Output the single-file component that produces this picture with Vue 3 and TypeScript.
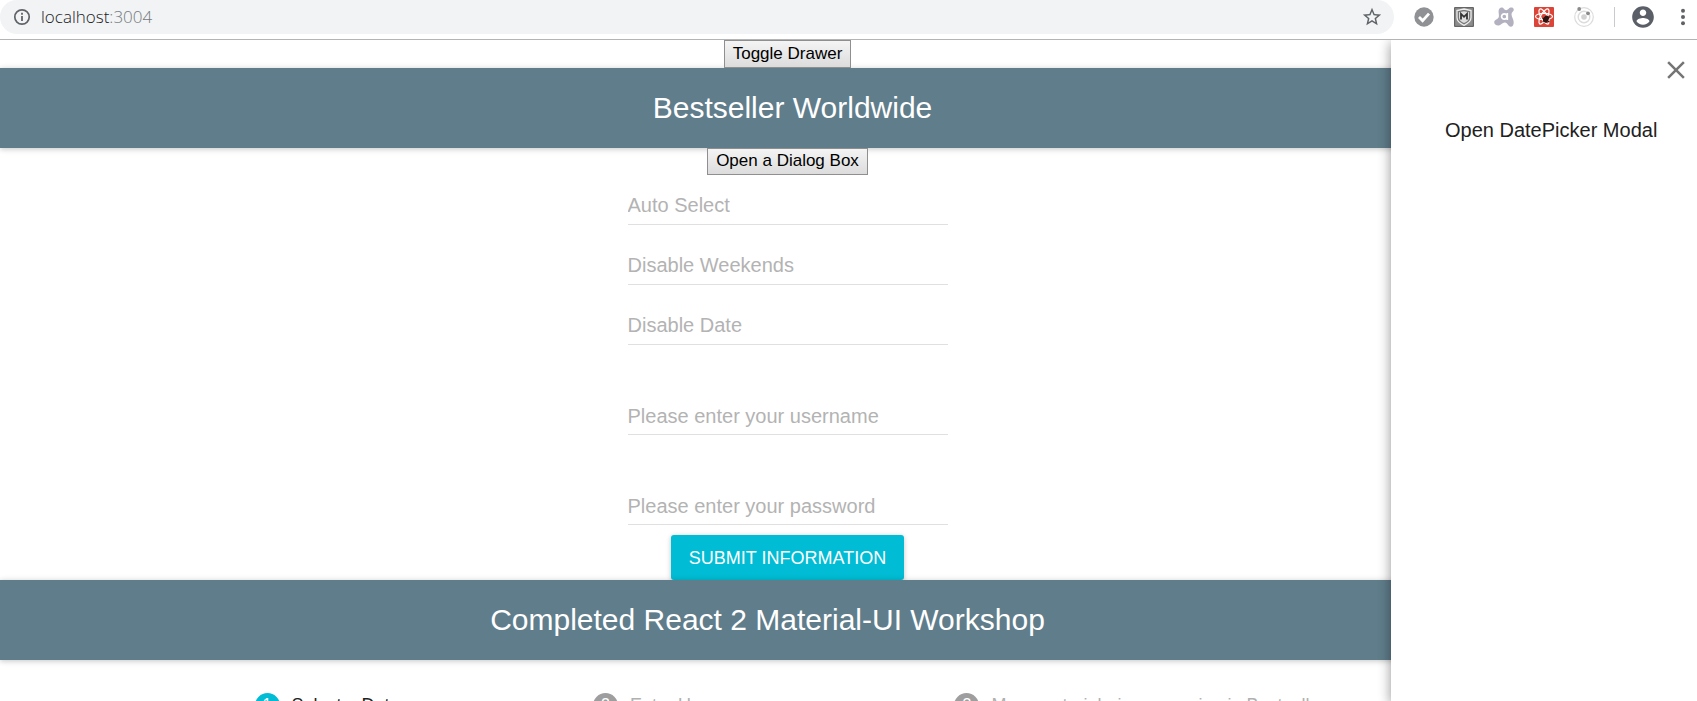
<script setup lang="ts">
import { ref } from 'vue'

interface Field {
  id: string
  label: string
  type: string
  tall: boolean
}

const fields: Field[] = [
  { id: 'auto', label: 'Auto Select', type: 'text', tall: false },
  { id: 'weekends', label: 'Disable Weekends', type: 'text', tall: false },
  { id: 'date', label: 'Disable Date', type: 'text', tall: false },
  { id: 'username', label: 'Please enter your username', type: 'text', tall: true },
  { id: 'password', label: 'Please enter your password', type: 'password', tall: true },
]

const steps: string[] = [
  'Select a Date',
  'Enter Username',
  'More material-ui now coming in Bestseller',
]

const drawerOpen = ref<boolean>(true)
const activeStep = ref<number>(0)
</script>

<template>
  <div class="window">
    <header class="toolbar">
      <div class="omnibox">
        <svg class="i18" viewBox="0 0 18 18" aria-hidden="true">
          <circle cx="9" cy="9" r="7.2" fill="none" stroke="#5f6368" stroke-width="1.7" />
          <path d="M9 8v5M9 4.8v1.9" stroke="#5f6368" stroke-width="1.8" />
        </svg>
        <span class="url">localhost<span class="port">:3004</span></span>
        <button class="plain" type="button" aria-label="Bookmark">
          <svg class="i22" viewBox="0 0 24 24">
            <path fill="#5f6368" d="M22 9.24l-7.19-.62L12 2 9.19 8.63 2 9.24l5.46 4.73L5.82 21 12 17.27 18.18 21l-1.63-7.03L22 9.24zM12 15.4l-3.76 2.27 1-4.28-3.32-2.88 4.38-.38L12 6.1l1.71 4.04 4.38.38-3.32 2.88 1 4.28L12 15.4z" />
          </svg>
        </button>
      </div>
      <div class="extensions">
        <button class="plain" type="button" aria-label="Checker">
          <svg class="i20" viewBox="0 0 20 20">
            <circle cx="10" cy="10" r="9.7" fill="#8f9194" />
            <path d="M5 10l3.6 3.6L15 6.6" fill="none" stroke="#fff" stroke-width="2.8" />
          </svg>
        </button>
        <button class="plain" type="button" aria-label="Shield">
          <svg class="i20" viewBox="0 0 20 20">
            <rect width="20" height="20" rx="1" fill="#666" />
            <rect x="1.2" y="1.2" width="17.6" height="17.6" fill="#8c8c8c" />
            <path d="M10 2l7 1.6v7c0 3.6-3 6-7 7.7-4-1.7-7-4.1-7-7.7v-7z" fill="#777" stroke="#eee" stroke-width="1.3" />
            <path d="M10 4.2l5 1.1v5.3c0 2.5-2 4.2-5 5.5-3-1.3-5-3-5-5.5V5.3z" fill="#ddd" />
            <path d="M7 12.5V6.8l3 3 3-3v5.700" fill="none" stroke="#333" stroke-width="1.8" />
          </svg>
        </button>
        <button class="plain" type="button" aria-label="Security">
          <svg class="i20" viewBox="0 0 20 20">
            <path d="M5.500 1.500C7 0 9 .4 10 2c1 1.500 3 1.500 4.500 0C16 0 19.500 0 19.800 2.600c.2 1.800-2.300 2.600-2.300 4.600 0 3 2.300 5 2.200 8 0 2.500-.8 4.500-3 4.500-2.400 0-3-3.700-5.700-4.200-2.500-.4-3.500 2.500-6 3-2.500.4-5-1.200-4.800-3.500.3-2.500 3.800-2.500 4.600-5C5.500 7.500 3.500 3.800 5.500 1.500z" fill="#b3b1bf" />
            <circle cx="10.300" cy="9.500" r="2.700" fill="none" stroke="#fff" stroke-width="1.700" />
            <path d="M13.300 6v7" stroke="#fff" stroke-width="1.700" />
          </svg>
        </button>
        <button class="plain" type="button" aria-label="React tools">
          <svg class="i20" viewBox="0 0 20 20">
            <rect width="20" height="20" rx="1" fill="#db4437" />
            <g fill="none" stroke="#fff" stroke-width="1.2">
              <ellipse cx="10" cy="9.5" rx="8.5" ry="3.2" />
              <ellipse cx="10" cy="9.5" rx="8.5" ry="3.2" transform="rotate(60 10 9.5)" />
              <ellipse cx="10" cy="9.5" rx="8.5" ry="3.2" transform="rotate(120 10 9.5)" />
            </g>
            <ellipse cx="12" cy="12" rx="2.6" ry="3.6" fill="#2b1512" transform="rotate(40 12 12)" />
            <path d="M8.500 11l7 4M9.500 15l6-5.500M12 9v7" stroke="#2b1512" stroke-width="1.1" />
          </svg>
        </button>
        <button class="plain" type="button" aria-label="Orbit">
          <svg class="i20" viewBox="0 0 20 20">
            <circle cx="10" cy="10" r="9.3" fill="none" stroke="#dcdcdc" stroke-width="1.2" />
            <circle cx="10" cy="10" r="5.8" fill="none" stroke="#dcdcdc" stroke-width="1.4" />
            <circle cx="10" cy="10" r="2.8" fill="#d2d2d2" />
            <circle cx="5.2" cy="2" r="1.9" fill="#8a8a8a" />
            <circle cx="14" cy="6.3" r="1.9" fill="#8a8a8a" />
          </svg>
        </button>
      </div>
      <span class="divider"></span>
      <button class="plain" type="button" aria-label="Profile">
        <svg class="i26" viewBox="0 0 24 24">
          <path fill="#5a5e66" d="M12 2C6.48 2 2 6.48 2 12s4.48 10 10 10 10-4.48 10-10S17.52 2 12 2zm0 3c1.66 0 3 1.34 3 3s-1.34 3-3 3-3-1.34-3-3 1.34-3 3-3zm0 14.2c-2.5 0-4.71-1.28-6-3.22.03-1.99 4-3.08 6-3.08 1.99 0 5.97 1.09 6 3.08-1.29 1.94-3.5 3.22-6 3.22z" />
        </svg>
      </button>
      <button class="plain menu" type="button" aria-label="Browser menu">
        <svg class="i20" viewBox="0 0 20 20" fill="#5f6368">
          <circle cx="10" cy="3.8" r="2" /><circle cx="10" cy="10" r="2" /><circle cx="10" cy="16.2" r="2" />
        </svg>
      </button>
    </header>

    <div class="viewport">
      <main class="page">
        <div class="row">
          <button class="native" type="button" @click="drawerOpen = !drawerOpen">Toggle Drawer</button>
        </div>
        <div class="appbar first"><h1>Bestseller Worldwide</h1></div>
        <div class="row dialog">
          <button class="native" type="button">Open a Dialog Box</button>
        </div>
        <form class="form" @submit.prevent>
          <div v-for="f in fields" :key="f.id" class="field" :class="{ tall: f.tall }">
            <input :id="f.id" :type="f.type" :placeholder="f.label" :aria-label="f.label" autocomplete="off" />
          </div>
          <button class="submit" type="submit">SUBMIT INFORMATION</button>
        </form>
        <div class="appbar second"><h1>Completed React 2 Material-UI Workshop</h1></div>
        <div class="stepper">
          <template v-for="(s, i) in steps" :key="s">
            <span v-if="i > 0" class="connector"></span>
            <span class="step" :class="{ active: i === activeStep }">
              <span class="badge">{{ i + 1 }}</span>{{ s }}
            </span>
          </template>
        </div>
      </main>

      <aside v-if="drawerOpen" class="drawer">
        <button class="plain close" type="button" aria-label="Close" @click="drawerOpen = false">
          <svg class="i30" viewBox="0 0 24 24">
            <path fill="#757575" d="M19 6.41L17.59 5 12 10.59 6.41 5 5 6.41 10.59 12 5 17.59 6.41 19 12 13.41 17.59 19 19 17.59 13.41 12z" />
          </svg>
        </button>
        <button class="plain item" type="button">Open DatePicker Modal</button>
      </aside>
    </div>
  </div>
</template>

<style>
body {
  margin: 0;
  overflow: hidden;
}
</style>

<style scoped>
.window {
  height: 100vh;
  display: flex;
  flex-direction: column;
  background: #fff;
  font-family: "Liberation Sans", Arial, sans-serif;
  overflow: hidden;
}
.window * {
  box-sizing: border-box;
}
svg {
  display: block;
}
.i18 { width: 18px; height: 18px; }
.i20 { width: 20px; height: 20px; }
.i22 { width: 22px; height: 22px; }
.i26 { width: 26px; height: 26px; }
.i30 { width: 30px; height: 30px; }
.plain {
  padding: 0;
  border: 0;
  background: none;
  font: inherit;
  color: inherit;
}
.toolbar {
  flex: none;
  display: flex;
  align-items: center;
  height: 40px;
  padding: 0 4px 6px 0;
  border-bottom: 1px solid #b4b4b4;
}
.omnibox {
  flex: 1;
  display: flex;
  align-items: center;
  height: 34px;
  padding: 0 11px 0 13px;
  border-radius: 17px;
  background: #f1f3f4;
}
.url {
  flex: 1;
  margin-left: 10px;
  font: 300 17px "Open Sans", "Noto Sans", sans-serif;
  color: #202124;
}
.port {
  color: #74797e;
}
.extensions {
  display: flex;
  gap: 20px;
  margin-left: 20px;
}
.divider {
  width: 1px;
  height: 20px;
  margin: 0 15px 0 20px;
  background: #c8cacc;
}
.menu {
  margin-left: 17px;
}
.viewport {
  position: relative;
  flex: 1;
  min-height: 0;
  overflow: hidden;
}
.page {
  margin-right: 122px;
}
.row {
  display: flex;
  justify-content: center;
  height: 28px;
}
.row.dialog {
  position: relative;
  height: 27px;
}
.native {
  height: 28px;
  padding: 0 8px;
  border: 1px solid #8f8f8f;
  border-radius: 0;
  background: linear-gradient(#f4f4f4, #dcdcdc);
  color: #000;
  font: 17px "Liberation Sans", Arial, sans-serif;
}
.dialog .native {
  height: 27px;
  padding-bottom: 2px;
}
.appbar {
  height: 80px;
  background: #607d8b;
  box-shadow: 0 1px 7px rgba(0, 0, 0, 0.12), 0 1px 5px rgba(0, 0, 0, 0.12);
}
.appbar.first {
  padding-left: 10px;
}
.appbar.second {
  position: relative;
  padding-right: 40px;
}
h1 {
  margin: 0;
  font-size: 30px;
  line-height: 80px;
  font-weight: 400;
  color: #fff;
  text-align: center;
}
.form {
  display: flex;
  flex-direction: column;
  align-items: center;
}
.field {
  width: 320px;
  height: 60px;
  padding-top: 10px;
}
.field.tall {
  height: 90px;
  padding-top: 40px;
}
.field input {
  display: block;
  width: 100%;
  height: 40px;
  padding: 2px 0 0;
  border: 0;
  border-bottom: 1px solid #e0e0e0;
  border-radius: 0;
  background: transparent;
  outline: 0;
  font: 20px "Liberation Sans", Arial, sans-serif;
  color: #212121;
}
.field.tall input {
  padding-top: 4px;
}
.field input::placeholder {
  color: #b3b3b3;
  opacity: 1;
}
.submit {
  height: 45px;
  padding: 2px 18px 0;
  border: 0;
  border-radius: 3px;
  background: #00bcd4;
  box-shadow: 0 1px 6px rgba(0, 0, 0, 0.12), 0 1px 4px rgba(0, 0, 0, 0.12);
  color: #fff;
  font: 18px "Liberation Sans", Arial, sans-serif;
}
.stepper {
  display: flex;
  align-items: center;
  max-width: 1076px;
  height: 90px;
  margin: 0 auto;
  padding-left: 5px;
}
.connector {
  flex: 1;
  height: 1px;
  margin: 0 18px;
  background: #bdbdbd;
}
.step {
  display: flex;
  align-items: center;
  gap: 12px;
  font-size: 18px;
  color: #b0b0b0;
  white-space: nowrap;
}
.step.active {
  color: #212121;
}
.badge {
  width: 25px;
  height: 25px;
  border-radius: 50%;
  background: #9e9e9e;
  color: #fff;
  font-size: 16px;
  line-height: 24px;
  text-align: center;
}
.active .badge {
  background: #00bcd4;
}
.drawer {
  position: absolute;
  top: 0;
  right: 0;
  bottom: 0;
  display: flex;
  flex-direction: column;
  width: 306px;
  padding: 15px 6px;
  background: #fff;
  box-shadow: 0 3px 12px rgba(0, 0, 0, 0.25), 0 3px 12px rgba(0, 0, 0, 0.2);
}
.close {
  align-self: flex-end;
}
.item {
  margin: 20px 0 0 48px;
  font-size: 20px;
  line-height: 50px;
  color: #212121;
  text-align: left;
}
</style>
